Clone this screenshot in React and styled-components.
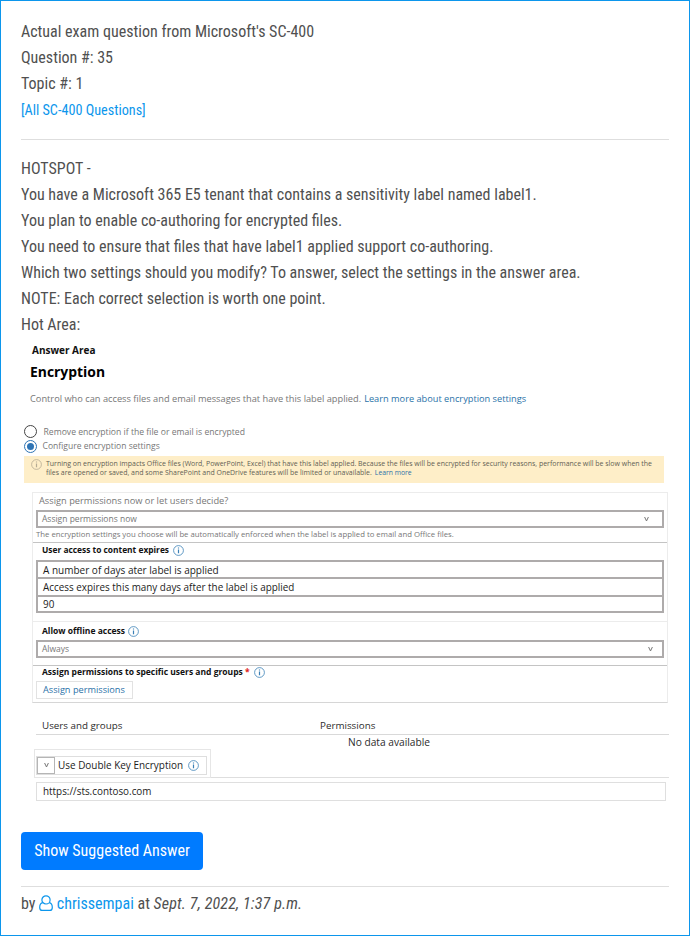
import React from "react";
import styled, { createGlobalStyle } from "styled-components";

const Global = createGlobalStyle`
  * { box-sizing: border-box; }
  body { margin: 0; background: #fff; }
`;

const Card = styled.main`
  width: 690px;
  height: 936px;
  padding: 18px 20px 0;
  border: 1px solid #0c96ec;
  background: #fff;
  color: #505050;
  font: 400 16px/26px "Roboto Condensed", Roboto, sans-serif;
`;

const Paragraph = styled.p`
  margin: 0;
`;

const Link = styled.a`
  color: #0c96ec;
  text-decoration: none;
  font-size: ${(p) => p.$size || 16}px;
`;

const Divider = styled.hr`
  height: 1px;
  margin: ${(p) => p.$margin};
  border: 0;
  background: #dedede;
`;

const Figure = styled.section`
  height: 494px;
  font-family: "Open Sans", "Noto Sans", sans-serif;
  line-height: 1;
  white-space: nowrap;
  color: #777;
`;

const Line = styled.div`
  display: flex;
  align-items: center;
  height: ${(p) => p.$h}px;
  margin-bottom: ${(p) => p.$gap || 0}px;
  padding-top: ${(p) => p.$top || 0}px;
  padding-left: ${(p) => p.$left || 0}px;
`;

const Label = styled.span`
  font-size: ${(p) => p.$size}px;
  font-weight: ${(p) => (p.$bold ? 700 : 400)};
  color: ${(p) => p.$color || "inherit"};
`;

const FigureLink = styled.a`
  margin-left: 3px;
  font-size: ${(p) => p.$size}px;
  color: #2a72a8;
`;

const Radio = styled.span`
  display: flex;
  align-items: center;
  justify-content: center;
  flex: none;
  width: 13px;
  height: 13px;
  margin-right: ${(p) => p.$gap}px;
  border: 1.4px solid ${(p) => (p.$on ? "#2e74b5" : "#444")};
  border-radius: 50%;
  &::after {
    content: "";
    width: 7px;
    height: 7px;
    border-radius: 50%;
    background: ${(p) => (p.$on ? "#2e74b5" : "transparent")};
  }
`;

const Banner = styled.div`
  display: flex;
  align-items: flex-start;
  width: 640px;
  height: 27px;
  margin: 3px 0 9px 3px;
  padding: 3px 0 0 7px;
  background: #feeec8;
  color: #625e54;
`;

const BannerText = styled.p`
  margin: 1px 0 0 4px;
  font-size: 6.96px;
  line-height: 8.8px;
`;

const Panel = styled.div`
  width: 636px;
  height: 211px;
  margin-left: 11px;
  padding-left: 3px;
  border: 1px solid #ececec;
  border-bottom-color: #d6d6d6;
`;

const PanelRule = styled.div`
  height: 1px;
  margin: ${(p) => p.$top || 0}px 0 0 -3px;
  background: ${(p) => p.$color};
`;

const Select = styled.div`
  display: flex;
  align-items: center;
  justify-content: space-between;
  width: 628px;
  height: 18px;
  padding: 0 ${(p) => p.$right}px 0 4px;
  border: 2px solid #aeabab;
  font-size: 8.5px;
`;

const OptionList = styled.div`
  width: 628px;
  border: 2px solid #aeabab;
`;

const Option = styled.div`
  display: flex;
  align-items: center;
  height: ${(p) => p.$h}px;
  padding-top: 1px;
  padding-left: 5px;
  border-top: ${(p) => (p.$first ? 0 : 2)}px solid #aeabab;
  font-size: ${(p) => (p.$first ? 10 : 9.9)}px;
  color: #1c1c1c;
`;

const AssignButton = styled.div`
  display: flex;
  align-items: center;
  width: 97px;
  height: 18px;
  margin-top: 2px;
  padding-left: 6px;
  border: 1px solid #e2e2e2;
  font-size: 9.2px;
  color: #2a72a8;
`;

const TableHead = styled.div`
  display: grid;
  grid-template-columns: 278px 1fr;
  align-items: center;
  width: 633px;
  height: 19px;
  margin: 13px 0 0 15px;
  padding-top: 1px;
  padding-left: 6px;
  border-bottom: 1px solid #d9d9d9;
  font-size: 9.8px;
  color: #2b2b2b;
`;

const KeySection = styled.div`
  display: flex;
  width: 635px;
  height: 29px;
  margin-left: 13px;
  border-bottom: 1px solid #dedede;
`;

const KeyOuter = styled.div`
  width: 177px;
  height: 29px;
  padding: 6px 0 0 1px;
  border: 1px solid #e6e6e6;
`;

const KeyInner = styled.div`
  display: flex;
  align-items: center;
  width: 171px;
  height: 19px;
  border: 1px solid #dedede;
  color: #1c1c1c;
`;

const KeyText = styled.span`
  padding-top: 1px;
  font-size: 9.95px;
`;

const KeyToggle = styled.div`
  display: flex;
  align-items: center;
  justify-content: center;
  width: 18px;
  height: 17px;
  margin-right: 3px;
  border: 1px solid #b5b5b5;
`;

const UrlField = styled.div`
  display: flex;
  align-items: center;
  width: 630px;
  height: 19px;
  margin: 4px 0 0 15px;
  padding-left: 6px;
  border: 1px solid #dfdfdf;
  font-size: 9.9px;
  color: #1c1c1c;
`;

const AnswerButton = styled.button`
  display: block;
  width: 182px;
  height: 38px;
  padding: 0;
  border: 0;
  border-radius: 4px;
  background: #007bff;
  color: #fff;
  font: inherit;
`;

const Byline = styled.footer`
  white-space: pre;
`;

const PostedAt = styled.i`
  letter-spacing: 0.16px;
`;

const Svg = styled.svg`
  flex: none;
  display: ${(p) => (p.$inline ? "inline" : "block")};
  margin-left: ${(p) => p.$left || 0}px;
  vertical-align: -2px;
`;

const Info = ({ left = 0, color = "#3a80b6" }) => (
  <Svg $left={left} width="11" height="11" viewBox="0 0 11 11" fill="none" stroke={color}>
    <circle cx="5.5" cy="5.500" r="4.9" strokeWidth="0.8" />
    <path d="M5.5 4.5v3.8M5.5 2.4v1.2" strokeWidth="1.2" />
  </Svg>
);

const Chevron = () => (
  <Svg width="5" height="5" viewBox="0 0 5 5" fill="none" stroke="#777">
    <path d="M.6 0 2.5 4 4.4 0" strokeWidth="1" />
  </Svg>
);

const UserIcon = () => (
  <Svg $inline width="14" height="16" viewBox="0 0 14 16" fill="none" stroke="#0c96ec" strokeWidth="1.2">
    <circle cx="7" cy="4.9" r="4.1" />
    <path d="M3.8 7.600C1.500 8 .7 10 .7 12.400c0 1.800 1 3 2.500 3h7.600c1.500 0 2.500-1.200 2.500-3 0-2.400-.8-4.400-3.100-4.800" />
  </Svg>
);

export default function App() {
  return (
    <>
      <Global />
      <Card>
        <Paragraph>Actual exam question from Microsoft's SC-400</Paragraph>
        <Paragraph>Question #: 35</Paragraph>
        <Paragraph>Topic #: 1</Paragraph>
        <Paragraph><Link $size={14.2}>[All SC-400 Questions]</Link></Paragraph>
        <Divider $margin="16px 0" />
        <Paragraph>HOTSPOT -</Paragraph>
        <Paragraph>You have a Microsoft 365 E5 tenant that contains a sensitivity label named label1.</Paragraph>
        <Paragraph>You plan to enable co-authoring for encrypted files.</Paragraph>
        <Paragraph>You need to ensure that files that have label1 applied support co-authoring.</Paragraph>
        <Paragraph>Which two settings should you modify? To answer, select the settings in the answer area.</Paragraph>
        <Paragraph>NOTE: Each correct selection is worth one point.</Paragraph>
        <Paragraph>Hot Area:</Paragraph>

        <Figure>
          <Line $h={24} $left={11}><Label $size={10} $bold $color="#111">Answer Area</Label></Line>
          <Line $h={20} $left={9}><Label $size={13.9} $bold $color="#000">Encryption</Label></Line>
          <Line $h={32} $left={9} $top={1} $gap={10}>
            <Label $size={9.25}>Control who can access files and email messages that have this label applied.</Label>
            <FigureLink $size={9.22}>Learn more about encryption settings</FigureLink>
          </Line>
          <Line $h={15} $left={3}>
            <Radio $gap={6.5} />
            <Line $h={15} $top={2}><Label $size={8.63}>Remove encryption if the file or email is encrypted</Label></Line>
          </Line>
          <Line $h={14} $left={3}><Radio $gap={5.5} $on /><Label $size={8.55}>Configure encryption settings</Label></Line>

          <Banner>
            <Info color="#b5ab94" />
            <BannerText>
              Turning on encryption impacts Office files (Word, PowerPoint, Excel) that have this label applied. Because the files will be encrypted for security reasons, performance will be slow when the
              <br />
              files are opened or saved, and some SharePoint and OneDrive features will be limited or unavailable.
              <FigureLink $size={6.8}>Learn more</FigureLink>
            </BannerText>
          </Banner>

          <Panel>
            <Line $h={15} $left={3} $gap={2}><Label $size={9.27}>Assign permissions now or let users decide?</Label></Line>
            <Select $right={13}>Assign permissions now<Chevron /></Select>
            <Line $h={14}><Label $size={7.75}>The encryption settings you choose will be automatically enforced when the label is applied to email and Office files.</Label></Line>
            <PanelRule $color="#c4c4c4" />
            <Line $h={15} $left={6} $gap={2}>
              <Label $size={8.38} $bold $color="#111">User access to content expires</Label><Info left={4} />
            </Line>
            <OptionList>
              <Option $h={15} $first>A number of days ater label is applied</Option>
              <Option $h={18}>Access expires this many days after the label is applied</Option>
              <Option $h={16}>90</Option>
            </OptionList>
            <PanelRule $top={8} $color="#ececec" />
            <Line $h={18} $left={6}>
              <Label $size={8.5} $bold $color="#111">Allow offline access</Label><Info left={3} />
            </Line>
            <Select $right={9}>Always<Chevron /></Select>
            <PanelRule $top={7} $color="#c4c4c4" />
            <Line $h={13} $left={6}>
              <Label $size={8.5} $bold $color="#111">Assign permissions to specific users and groups</Label>
              <Label $size={8.5} $bold $color="#e02020">&nbsp;*</Label><Info left={4} />
            </Line>
            <AssignButton>Assign permissions</AssignButton>
          </Panel>

          <TableHead><span>Users and groups</span><span>Permissions</span></TableHead>
          <Line $h={14} $left={327} $top={1}><Label $size={10.2} $color="#2b2b2b">No data available</Label></Line>

          <KeySection>
            <KeyOuter>
              <KeyInner>
                <KeyToggle><Chevron /></KeyToggle>
                <KeyText>Use Double Key Encryption</KeyText>
                <Info left={5} />
              </KeyInner>
            </KeyOuter>
          </KeySection>
          <UrlField>https://sts.contoso.com</UrlField>
        </Figure>

        <AnswerButton>Show Suggested Answer</AnswerButton>
        <Divider $margin="16px 0 4px" />
        <Byline>by <UserIcon /> <Link>chrissempai</Link> at <PostedAt>Sept. 7, 2022, 1:37 p.m.</PostedAt></Byline>
      </Card>
    </>
  );
}
